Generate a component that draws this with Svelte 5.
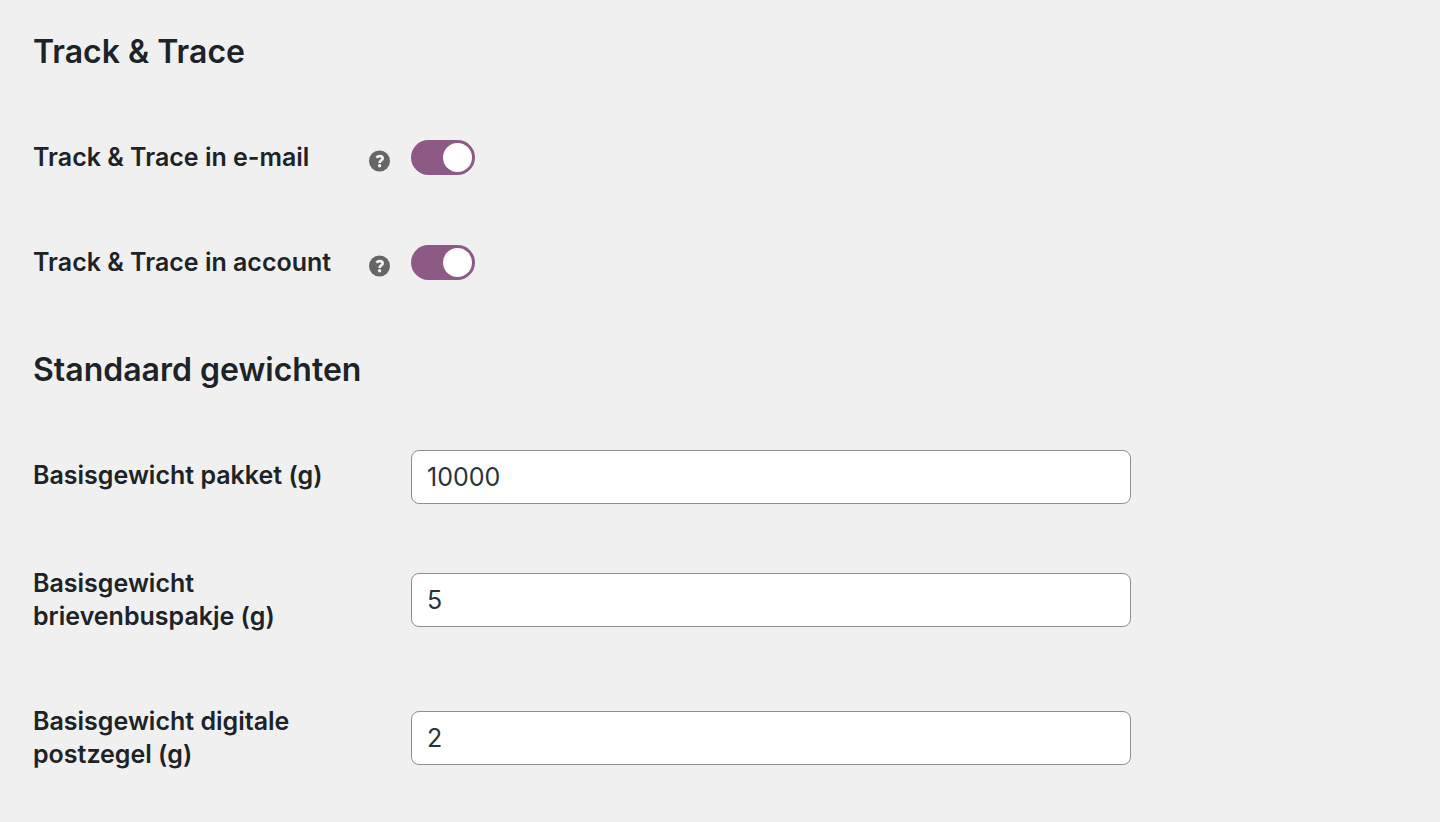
<script>
  let toggles = $state([
    { id: 'email', label: 'Track & Trace in e-mail', on: true },
    { id: 'account', label: 'Track & Trace in account', on: true }
  ]);
  let weights = $state([
    { id: 'parcel', label: 'Basisgewicht pakket (g)', value: '10000' },
    { id: 'mailbox', label: 'Basisgewicht brievenbuspakje (g)', value: '5' },
    { id: 'stamp', label: 'Basisgewicht digitale postzegel (g)', value: '2' }
  ]);
</script>

<main>
  <h2>Track &amp; Trace</h2>
  <div class="group">
    {#each toggles as item}
      <div class="row">
        <label for={item.id}>{item.label}</label>
        <svg class="help" viewBox="0 0 22 22" aria-hidden="true">
          <circle cx="10.5" cy="11" r="10.5" fill="#666" />
          <path d="M7.3 7.5C8.3 6.6 9.4 6.1 10.8 6.1c1.8 0 2.9.8 2.9 2.2 0 2.2-3.1 2.1-3.1 4.7" fill="none" stroke="#f0f0f0" stroke-width="2.7" />
          <circle cx="10.6" cy="15.8" r="1.7" fill="#f0f0f0" />
        </svg>
        <input class="switch" type="checkbox" id={item.id} bind:checked={item.on} />
      </div>
    {/each}
  </div>

  <h2>Standaard gewichten</h2>
  <div class="group">
    {#each weights as item}
      <div class="row">
        <label for={item.id}>{item.label}</label>
        <input class="field" type="text" id={item.id} bind:value={item.value} />
      </div>
    {/each}
  </div>
</main>

<style>
  :global(body) {
    margin: 0;
    background: #f0f0f0;
  }

  main {
    padding: 30px 33px 0;
    color: #1d2327;
    font-family: Inter, sans-serif;
  }

  h2 {
    margin: 0;
    font-size: 32px;
    line-height: 44px;
    font-weight: 600;
  }

  .group {
    padding: 31px 0 33px;
  }

  .row {
    display: grid;
    grid-template-columns: 316px 22px minmax(0, 720px);
    column-gap: 20px;
    align-items: center;
  }

  .row label {
    grid-column: 1;
    align-self: start;
    padding: 36px 0;
    font-size: 25px;
    line-height: 33px;
    font-weight: 600;
  }

  .help {
    grid-column: 2;
    width: 22px;
    height: 22px;
    margin-top: 6px;
  }

  .row input {
    grid-column: 3;
  }

  .switch {
    appearance: none;
    display: flex;
    align-items: center;
    justify-content: flex-end;
    box-sizing: border-box;
    width: 64px;
    height: 35px;
    margin: 0;
    padding: 3px;
    border-radius: 18px;
    background: #8d5a86;
    cursor: pointer;
  }

  .switch::before {
    content: '';
    width: 29px;
    height: 29px;
    border-radius: 50%;
    background: #fff;
  }

  .switch:not(:checked) {
    justify-content: flex-start;
    background: #999;
  }

  .field {
    box-sizing: border-box;
    width: 100%;
    height: 54px;
    margin: 27px 0;
    padding: 0 15px;
    border: 1px solid #8c8f94;
    border-radius: 8px;
    background: #fff;
    color: #2c3338;
    font: 25px/33px Inter, sans-serif;
  }
</style>
